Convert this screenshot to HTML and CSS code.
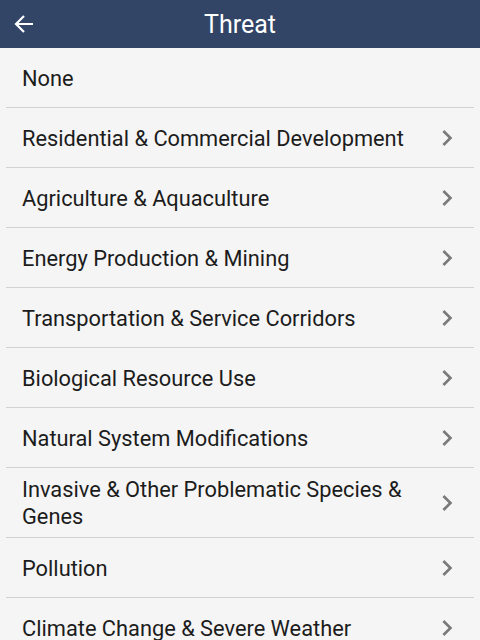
FILE: index.html
```html
<!DOCTYPE html>
<html>
<head>
  <title>Threat</title>
  <link rel="stylesheet" href="styles.css">
</head>
<body>
  <header class="app-bar">
    <button class="back-btn" aria-label="Back">
      <svg width="20" height="20" viewBox="0 0 20 20">
        <path d="M19 10H2M10 2L2 10l8 8" fill="none" stroke="#fff" stroke-width="2.2"/>
      </svg>
    </button>
    <h1 class="title">Threat</h1>
  </header>

  <ul class="threat-list">
    <li class="item"><span class="label">None</span></li>
    <li class="item has-children"><span class="label">Residential &amp; Commercial Development</span><svg class="chevron" viewBox="0 0 24 24"><path d="M10 6L8.59 7.41 13.17 12l-4.58 4.59L10 18l6-6z"/></svg></li>
    <li class="item has-children"><span class="label">Agriculture &amp; Aquaculture</span><svg class="chevron" viewBox="0 0 24 24"><path d="M10 6L8.59 7.41 13.17 12l-4.58 4.59L10 18l6-6z"/></svg></li>
    <li class="item has-children"><span class="label">Energy Production &amp; Mining</span><svg class="chevron" viewBox="0 0 24 24"><path d="M10 6L8.59 7.41 13.17 12l-4.58 4.59L10 18l6-6z"/></svg></li>
    <li class="item has-children"><span class="label">Transportation &amp; Service Corridors</span><svg class="chevron" viewBox="0 0 24 24"><path d="M10 6L8.59 7.41 13.17 12l-4.58 4.59L10 18l6-6z"/></svg></li>
    <li class="item has-children"><span class="label">Biological Resource Use</span><svg class="chevron" viewBox="0 0 24 24"><path d="M10 6L8.59 7.41 13.17 12l-4.58 4.59L10 18l6-6z"/></svg></li>
    <li class="item has-children"><span class="label">Natural System Modifications</span><svg class="chevron" viewBox="0 0 24 24"><path d="M10 6L8.59 7.41 13.17 12l-4.58 4.59L10 18l6-6z"/></svg></li>
    <li class="item has-children"><span class="label">Invasive &amp; Other Problematic Species &amp; Genes</span><svg class="chevron" viewBox="0 0 24 24"><path d="M10 6L8.59 7.41 13.17 12l-4.58 4.59L10 18l6-6z"/></svg></li>
    <li class="item has-children"><span class="label">Pollution</span><svg class="chevron" viewBox="0 0 24 24"><path d="M10 6L8.59 7.41 13.17 12l-4.58 4.59L10 18l6-6z"/></svg></li>
    <li class="item has-children"><span class="label">Climate Change &amp; Severe Weather</span><svg class="chevron" viewBox="0 0 24 24"><path d="M10 6L8.59 7.41 13.17 12l-4.58 4.59L10 18l6-6z"/></svg></li>
  </ul>
</body>
</html>
```

FILE: styles.css
```css
body {
  margin: 0;
  font-family: Roboto, "Liberation Sans", sans-serif;
  background-color: #f5f5f5;
  color: #1c1c1c;
}

.app-bar {
  height: 48px;
  background-color: #324567;
  display: flex;
  align-items: center;
  justify-content: center;
  position: relative;
}

.back-btn {
  position: absolute;
  left: 14px;
  top: 14px;
  width: 20px;
  height: 20px;
  padding: 0;
  border: none;
  background: none;
  display: flex;
}

.title {
  margin: 0;
  font-size: 25px;
  font-weight: 400;
  color: #fff;
}

.threat-list {
  list-style-type: none;
  margin: 0;
  padding: 0;
}

.item {
  box-sizing: border-box;
  min-height: 60px;
  margin: 0 6px;
  padding: 8px 16px 7px 16px;
  border-bottom: 1px solid #d2d2d2;
  display: flex;
  align-items: center;
  font-size: 21.8px;
  line-height: 27px;
}

.label {
  flex: 1;
  padding-right: 20px;
}

.chevron {
  width: 32px;
  height: 32px;
  margin-right: -5px;
  flex-shrink: 0;
  fill: #7a7a7a;
}
```
